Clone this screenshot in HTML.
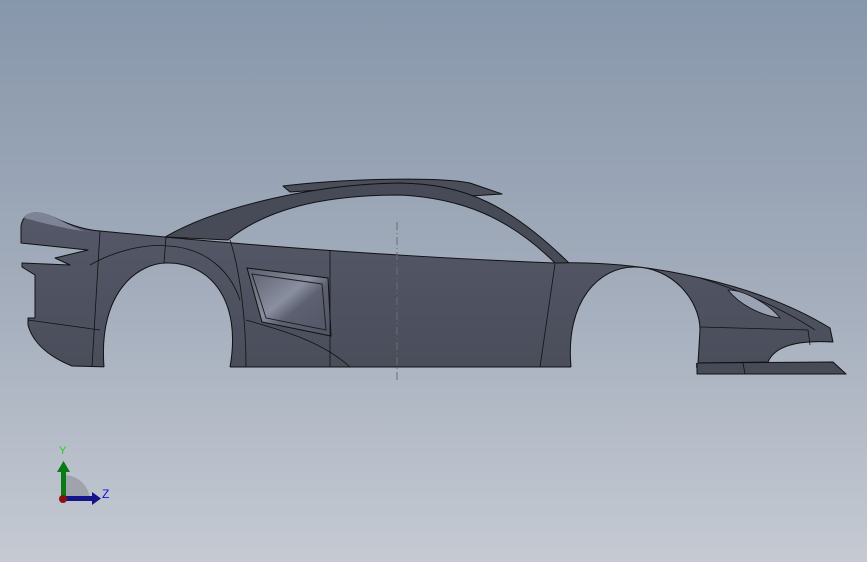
<!DOCTYPE html>
<html><head><meta charset="utf-8"><style>html,body{margin:0;padding:0;overflow:hidden}svg{display:block}</style></head><body>
<svg width="867" height="562" viewBox="0 0 867 562" xmlns="http://www.w3.org/2000/svg">
<defs>
<linearGradient id="bg" gradientUnits="userSpaceOnUse" x1="0" y1="0" x2="0" y2="562">
<stop offset="0" stop-color="#8797ab"/><stop offset="0.5" stop-color="#a2acbb"/><stop offset="1" stop-color="#c5cad3"/>
</linearGradient>
<linearGradient id="body" x1="0" y1="0" x2="0" y2="1">
<stop offset="0" stop-color="#545868"/><stop offset="1" stop-color="#4a4d5a"/>
</linearGradient>
<linearGradient id="vent" x1="0" y1="0" x2="1" y2="1">
<stop offset="0" stop-color="#5a5e6e"/><stop offset="0.45" stop-color="#8a8fa0"/><stop offset="0.6" stop-color="#5c6070"/><stop offset="1" stop-color="#505464"/>
</linearGradient>
</defs>
<rect width="867" height="562" fill="url(#bg)"/>
<g stroke="#111" stroke-width="1" stroke-linejoin="round">
<path d="M283,186 C350,178 440,177 470,183 L502,194 L470,196 C420,188 340,188 290,192 Z" fill="#4a4e5b"/>
<path d="M165,237 C220,205 320,184 400,183 C465,184 510,205 570,264 L556,264 C510,218 462,198 400,195 C320,195 265,210 228,240 Z" fill="#474b58"/>
<path d="M21,226 C24,210 38,210 55,218 C70,225 85,230 100,231 L165,237 C250,245 400,257 555,263 C650,260 760,285 830,328 L833,342 C800,340 775,345 768,362 L697,363 L697,367 L110,367 L72,366 C45,355 32,340 28,325 L28,318 L35,318 L35,275 L22,267 L22,263 L70,265 L55,258 L88,250 L21,243 Z" fill="url(#body)"/>
<path d="M697,363 L833,362 L846,374 L697,374 Z" fill="#474b58"/>
</g>
<path d="M104,368 C98,290 140,262 168,263 C210,263 242,300 230,368 Z" fill="url(#bg)"/>
<path d="M571,368 C565,300 600,267 634,267 C672,267 700,300 700,330 L698,363 L696,363 L696,368 Z" fill="url(#bg)"/>
<g fill="none" stroke="#111" stroke-width="1">
<path d="M104,367 C98,290 140,262 168,263 C210,263 242,300 230,367"/>
<path d="M571,367 C565,300 600,267 634,267 C672,267 700,300 700,330 L698,363"/>
</g>
<g stroke="#111" stroke-width="1">
<path d="M247,268 L328,278 L331,336 L262,322 Z" fill="url(#vent)"/>
<path d="M252,274 L322,284 L326,330 L266,318 Z" fill="none" stroke="#222"/>
<g fill="none" stroke="#111" stroke-width="0.8">
<path d="M100,231 L92,367"/>
<path d="M166,237 L164,263"/>
<path d="M230,240 C240,270 246,320 246,367"/>
<path d="M330,250 L330,367"/>
<path d="M555,264 L540,367"/>
<path d="M28,320 L100,330"/>
<path d="M90,265 C120,248 150,244 168,246 C205,248 230,270 240,300"/>
<path d="M700,327 L808,330 L810,345"/>
<path d="M743,363 L745,374"/>
<path d="M246,320 C280,330 320,340 350,367"/>
<path d="M700,278 C740,290 785,310 815,330"/>
</g>
<path d="M728,290 C745,290 770,305 780,318 C760,315 740,305 728,290 Z" fill="#9aa3b3" stroke="#111" stroke-width="0.8"/>
</g>
<path d="M24,218 C30,208 45,212 60,220 C75,228 85,232 90,232 C60,228 40,222 24,218 Z" fill="#7e8396"/>
<line x1="397" y1="222" x2="397" y2="382" stroke="#6d6d6d" stroke-width="1" stroke-dasharray="8,3,1,3"/>
<path d="M64,500 L64,475 A26,26 0 0 1 90,500 Z" fill="#9ea3ad"/>
<rect x="61" y="470" width="5" height="30" fill="#0a7a16"/>
<path d="M57,472 L63.5,461 L70,472 Z" fill="#0a7a16"/>
<rect x="63" y="496" width="30" height="5" fill="#14148a"/>
<path d="M92,492 L101,498.5 L92,505 Z" fill="#14148a"/>
<circle cx="63" cy="499" r="4" fill="#8a0f0f"/>
<text x="59" y="454" font-family="Liberation Sans, sans-serif" font-size="11" fill="#20d020">Y</text>
<text x="102" y="498" font-family="Liberation Sans, sans-serif" font-size="12" fill="#1010e0">Z</text>
</svg>
</body></html>
